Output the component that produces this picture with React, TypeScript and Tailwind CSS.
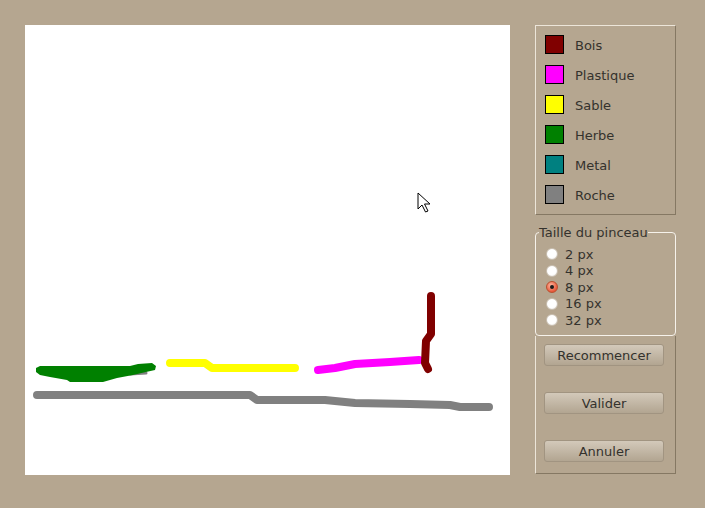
import { useState } from 'react';

const materials = [
  { label: 'Bois', color: 'bg-[#800000]' },
  { label: 'Plastique', color: 'bg-[#ff00ff]' },
  { label: 'Sable', color: 'bg-[#ffff00]' },
  { label: 'Herbe', color: 'bg-[#008000]' },
  { label: 'Metal', color: 'bg-[#008080]' },
  { label: 'Roche', color: 'bg-[#808080]' },
];

const sizes = ['2 px', '4 px', '8 px', '16 px', '32 px'];

const actions = ['Recommencer', 'Valider', 'Annuler'];

function Canvas() {
  return (
    <svg width={485} height={450} className="bg-white shrink-0 block">
      <g transform="translate(-25,-25)" fill="none" strokeLinecap="round" strokeLinejoin="round" strokeWidth={8}>
        {/* Roche */}
        <polyline
          stroke="#808080"
          points="37,395 250,395 257,400 325,400 355,403 410,404 450,405 460,407 489,407"
        />
        <polyline stroke="#808080" strokeWidth={3} points="130,374 146,373" />
        {/* Herbe */}
        <path
          fill="#008000"
          stroke="none"
          d="M40 366 L130 366 L138 364 L152 363 L156 366 L155 370 L146 372 L133 375 L117 378 L103 382 L70 382 L67 380 L50 377 L40 375 L36 372 L36 368 Z"
        />
        {/* Sable */}
        <polyline stroke="#ffff00" points="170,363 205,363 212,368 295,368" />
        {/* Plastique */}
        <polyline stroke="#ff00ff" points="318,370 335,368 355,364 390,362 419,360" />
        {/* Bois */}
        <polyline stroke="#800000" points="431,296 431,334 426,341 425,363 428,369" />
      </g>
      {/* mouse pointer */}
      <path
        d="M393 168 L393 184 L397 180 L400.5 187 L403 186 L399.5 179 L405 179 Z"
        fill="#ffffff"
        stroke="#000000"
        strokeWidth={1}
        strokeLinejoin="miter"
      />
    </svg>
  );
}

function Radio({ checked }: { checked: boolean }) {
  return checked ? (
    <span className="w-[12px] h-[12px] rounded-full border border-[#b8502f] bg-[radial-gradient(circle_at_40%_35%,#ffb8a0,#e8583a_70%)] flex items-center justify-center shrink-0">
      <span className="w-[4px] h-[4px] rounded-full bg-[#1a1a1a]" />
    </span>
  ) : (
    <span className="w-[12px] h-[12px] rounded-full border border-[#c9bfb1] bg-[radial-gradient(circle_at_45%_40%,#ffffff_55%,#e2ddd6)] shrink-0" />
  );
}

export default function App() {
  const [size, setSize] = useState('8 px');

  return (
    <div
      className="w-[705px] h-[508px] bg-[#b5a690] flex gap-[25px] pt-[25px] pl-[25px] text-[13px] text-[#34322d]"
      style={{ fontFamily: '"DejaVu Sans", sans-serif' }}
    >
      <Canvas />

      <div className="w-[141px] flex flex-col">
        {/* Materials */}
        <div className="border-t border-l border-t-[#ece5d9] border-l-[#ece5d9] border-r border-b border-r-[#857863] border-b-[#857863] pt-[9px] pl-[9px] pb-[11px] flex flex-col gap-[12px]">
          {materials.map((m) => (
            <div key={m.label} className="flex items-center gap-[11px] h-[18px]">
              <span className={`w-[19px] h-[19px] border border-black shrink-0 ${m.color}`} />
              <span className="leading-none pt-[2px]">{m.label}</span>
            </div>
          ))}
        </div>

        {/* Brush size */}
        <fieldset className="mt-[10px] border border-[#f6f2eb] rounded-[4px]">
          <legend className="ml-[3px] leading-[15px]">Taille du pinceau</legend>
          <div className="pl-[10px] pt-[6px] pb-[6px]">
            {sizes.map((s) => (
              <label
                key={s}
                className="flex items-center gap-[7px] h-[16.5px] leading-none cursor-default"
                onClick={() => setSize(s)}
              >
                <Radio checked={size === s} />
                <span>{s}</span>
              </label>
            ))}
          </div>
        </fieldset>

        {/* Actions */}
        <div className="border-l border-l-[#ece5d9] border-r border-b border-r-[#857863] border-b-[#857863] pt-[8px] pb-[11px] pl-[8px] flex flex-col gap-[26px]">
          {actions.map((a) => (
            <button
              key={a}
              className="w-[120px] h-[22px] rounded-[3px] border border-[#a19481] bg-gradient-to-b from-[#d3c9ba] to-[#b2a591] text-center leading-none pt-[1px] text-[#34322d]"
            >
              {a}
            </button>
          ))}
        </div>
      </div>
    </div>
  );
}
